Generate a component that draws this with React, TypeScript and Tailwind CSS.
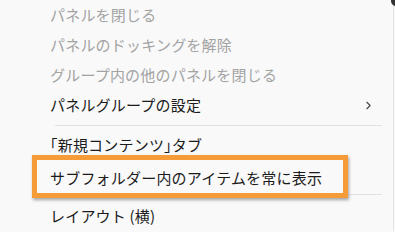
import { ChevronRight } from "lucide-react";
import type { ReactNode } from "react";

const FONT = { fontFamily: '"Noto Sans CJK JP", "Noto Sans", sans-serif' };

function Row({ label, disabled, sub }: { label: ReactNode; disabled?: boolean; sub?: boolean }) {
  return (
    <div className={`flex h-[30px] items-center pl-[50px] pr-[18px] text-[15px] ${disabled ? "text-[#a3a3a3]" : "text-[#1b1b1b]"}`}>
      <span className="flex-1 whitespace-nowrap tracking-[0.2px]">{label}</span>
      {sub && <ChevronRight className="h-[13px] w-[13px] text-[#444]" strokeWidth={2} />}
    </div>
  );
}

export default function App() {
  return (
    <div className="relative h-[232px] w-[395px] overflow-hidden bg-[#f9f9f9]" style={FONT}>
      <div className="flex w-[394px] flex-col border-r border-[#e4e4e4]">
        <Row label="パネルを閉じる" disabled />
        <Row label="パネルのドッキングを解除" disabled />
        <Row label="グループ内の他のパネルを閉じる" disabled />
        <Row label="パネルグループの設定" sub />
        <div className="mb-[4px] ml-[55px] mr-[11px] mt-[5px] h-px bg-[#e2e2e2]" />
        <Row
          label={
            <>
              <span className="[font-feature-settings:'halt']">「</span>新規コンテンツ
              <span className="[font-feature-settings:'halt']">」</span>タブ
            </>
          }
        />
        <div className="h-[3px]" />
        <Row label="サブフォルダー内のアイテムを常に表示" />
        <div className="mb-[6px] ml-[55px] mr-[11px] mt-[1px] h-px bg-[#e2e2e2]" />
        <Row label="レイアウト (横)" />
      </div>
      <div className="pointer-events-none absolute left-[32px] top-[155px] h-[43px] w-[316px] border-[5px] border-[#f59b38] shadow-[1px_2px_3px_rgba(0,0,0,0.35)]" />
      <div className="absolute right-[-6px] top-[-6px] h-[12px] w-[10px] rounded-full bg-[#333]" />
    </div>
  );
}
